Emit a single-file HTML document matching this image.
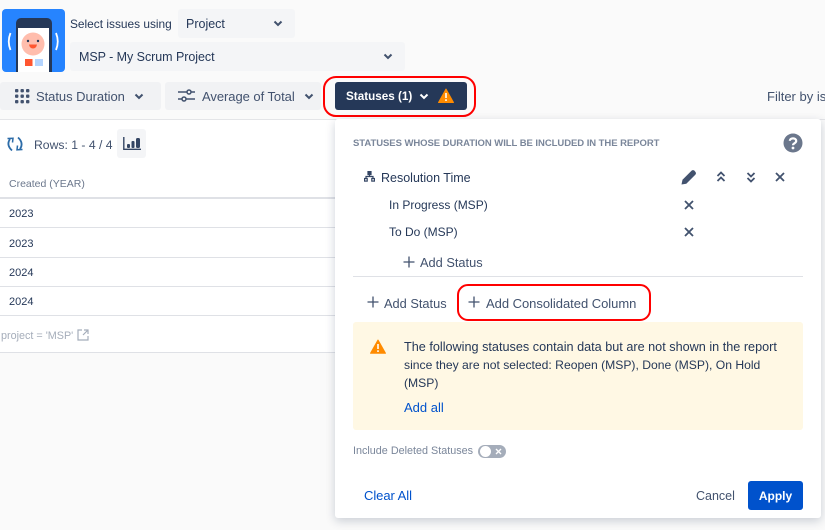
<!DOCTYPE html>
<html><head><meta charset="utf-8">
<style>
html,body{margin:0;padding:0;width:825px;height:530px;overflow:hidden;background:#fafafa;}
body{position:relative;font-family:"Liberation Sans",sans-serif;font-size:12.5px;color:#253858;}
.t{position:absolute;white-space:nowrap;line-height:16px;}
.b{position:absolute;background:#f4f5f7;border-radius:3px;}
svg{position:absolute;overflow:visible;}
.l{position:absolute;height:1px;background:#dfe1e6;}
</style></head><body>
<div style="position:absolute;left:0;top:120px;width:335px;height:232px;background:#fff"></div>
<div class="l" style="left:0;top:119px;width:825px;background:#e4e5e8"></div>

<svg style="left:2px;top:9px" width="63" height="63" viewBox="0 0 63 63">
<path d="M4 0H59a4 4 0 0 1 4 4V59a4 4 0 0 1-4 4H4a4 4 0 0 1-4-4V4a4 4 0 0 1 4-4z" fill="#2684ff"/>
<path d="M14 63V14a5 5 0 0 1 5-5H45a5 5 0 0 1 5 5V63z" fill="#253858"/>
<rect x="16" y="19" width="31" height="44" fill="#fff"/>
<circle cx="31" cy="35" r="11.500" fill="#ffbdad"/>
<path d="M27 35.500h8q-.8 4-4 4t-4-4z" fill="#ff5630"/>
<circle cx="26" cy="32" r="1.200" fill="#253858"/><circle cx="36" cy="32" r="1.200" fill="#253858"/>
<rect x="23" y="50" width="7.500" height="7" fill="#ff5630"/><rect x="33" y="50" width="8" height="7" fill="#b3d4ff"/>
<path d="M8.500 24q-3.500 8.500 0 17M54 24q3.500 8.500 0 17" stroke="#fff" stroke-width="1.800" fill="none"/>
</svg>

<div class="t" style="left:70px;top:16px;font-size:11.900px">Select issues using</div>
<div class="b" style="left:178px;top:9px;width:117px;height:29px"></div>
<div class="t" style="left:186px;top:16px;font-size:12.5px">Project</div>
<svg style="left:273px;top:20px" width="10" height="7"><path d="M1.500 1.500 5 5 8.500 1.500" stroke="#42526e" stroke-width="2" fill="none"/></svg>
<div class="b" style="left:70px;top:42px;width:335px;height:29px"></div>
<div class="t" style="left:79px;top:49px;letter-spacing:-.05px">MSP - My Scrum Project</div>
<svg style="left:383px;top:53px" width="10" height="7"><path d="M1.500 1.500 5 5 8.500 1.500" stroke="#42526e" stroke-width="2" fill="none"/></svg>

<div class="b" style="left:0;top:82px;width:161px;height:28px;background:#f1f2f4"></div>
<svg style="left:14px;top:88px" width="16" height="16" fill="#42526e">
<rect x="1" y="1" width="3.400" height="3.400" rx="1"/><rect x="6.500" y="1" width="3.400" height="3.400" rx="1"/><rect x="12" y="1" width="3.400" height="3.400" rx="1"/>
<rect x="1" y="6.500" width="3.400" height="3.400" rx="1"/><rect x="6.500" y="6.500" width="3.400" height="3.400" rx="1"/><rect x="12" y="6.500" width="3.400" height="3.400" rx="1"/>
<rect x="1" y="12" width="3.400" height="3.400" rx="1"/><rect x="6.500" y="12" width="3.400" height="3.400" rx="1"/><rect x="12" y="12" width="3.400" height="3.400" rx="1"/></svg>
<div class="t" style="left:36px;top:89px;color:#42526e;font-size:13px;letter-spacing:-.05px">Status Duration</div>
<svg style="left:134px;top:93px" width="10" height="7"><path d="M1.500 1.500 5 5 8.500 1.500" stroke="#42526e" stroke-width="2" fill="none"/></svg>

<div class="b" style="left:165px;top:82px;width:156px;height:28px;background:#f1f2f4"></div>
<svg style="left:178px;top:88px" width="18" height="16" fill="none" stroke="#42526e" stroke-width="1.500">
<path d="M0 4H9M13 4H17M0 11H4M8 11H17"/><circle cx="11" cy="4" r="2"/><circle cx="6" cy="11" r="2"/></svg>
<div class="t" style="left:202px;top:89px;color:#42526e;font-size:13px;letter-spacing:-.05px">Average of Total</div>
<svg style="left:304px;top:93px" width="10" height="7"><path d="M1.500 1.500 5 5 8.500 1.500" stroke="#42526e" stroke-width="2" fill="none"/></svg>

<div style="position:absolute;left:323px;top:76px;width:149px;height:37px;border:2px solid #f00;border-radius:13px"></div>
<div style="position:absolute;left:335px;top:82px;width:132px;height:28px;background:#253858;border-radius:3px"></div>
<div class="t" style="left:346px;top:89px;color:#fff;font-weight:bold;font-size:11.700px">Statuses (1)</div>
<svg style="left:419px;top:93px" width="10" height="7"><path d="M1.500 1.500 5 5 8.500 1.500" stroke="#fff" stroke-width="2" fill="none"/></svg>
<svg style="left:438px;top:88px" width="16" height="15"><path d="M8 1 15.500 14.500H.5z" fill="#ff8b00" stroke="#ff8b00" stroke-linejoin="round"/><path d="M8 5V10M8 11.300V13" stroke="#fff" stroke-width="1.600"/></svg>
<div class="t" style="left:767px;top:89px;color:#42526e;font-size:13px">Filter by is</div>

<svg style="left:7px;top:136px" width="16" height="16" fill="none" stroke="#2d6ca8" stroke-width="1.800"><path d="M5 14.500Q-1 9 3 3"/><path d="M11 1.500Q17 7 13 13"/><path d="M.5 2.500 6 2.300 5.500 6.500" stroke-width="1.500"/><path d="M15.500 13.500 10 13.800 10.500 9.500" stroke-width="1.500"/></svg>
<div class="t" style="left:34px;top:137px;color:#42526e;font-size:12.2px">Rows: 1 - 4 / 4</div>
<div class="b" style="left:117px;top:129px;width:29px;height:29px"></div>
<svg style="left:123px;top:137px" width="18" height="14"><path d="M.8 0V12.300H18" stroke="#344563" stroke-width="1.400" fill="none"/><rect x="4" y="7" width="3" height="4" rx="1" fill="#344563"/><rect x="8.500" y="4" width="3" height="7" rx="1" fill="#344563"/><rect x="13" y="1" width="4" height="10" rx="1.500" fill="#344563"/></svg>

<div class="t" style="left:9px;top:176px;font-size:10.500px;color:#6b778c">Created (YEAR)</div>
<div class="l" style="left:0;top:197px;width:335px;height:2px"></div>
<div class="t" style="left:9px;top:206px;font-size:11px">2023</div>
<div class="l" style="left:0;top:227px;width:335px"></div>
<div class="t" style="left:9px;top:236px;font-size:11px">2023</div>
<div class="l" style="left:0;top:257px;width:335px"></div>
<div class="t" style="left:9px;top:265px;font-size:11px">2024</div>
<div class="l" style="left:0;top:286px;width:335px"></div>
<div class="t" style="left:9px;top:294px;font-size:11px">2024</div>
<div class="l" style="left:0;top:315px;width:335px"></div>
<div class="t" style="left:1px;top:328px;font-size:10.800px;color:#a5adba">project = 'MSP'</div>
<svg style="left:77px;top:329px" width="12" height="12" fill="none" stroke="#a5adba" stroke-width="1.200"><path d="M5 1H1V11H11V7M7 1H11V5M11 1 6 6"/></svg>
<div class="l" style="left:0;top:352px;width:335px"></div>

<div style="position:absolute;left:335px;top:119px;width:486px;height:399px;background:#fff;border-radius:3px;box-shadow:0 3px 10px rgba(9,30,66,.2)"></div>
<div class="t" style="left:353px;top:136px;font-size:9.500px;font-weight:bold;color:#7a869a;letter-spacing:-.05px">STATUSES WHOSE DURATION WILL BE INCLUDED IN THE REPORT</div>
<svg style="left:783px;top:133px" width="20" height="20"><circle cx="10" cy="10" r="9.500" fill="#6b778c"/><path d="M6.800 7.800C7 4.500 13.200 4.500 13.200 8 13.200 10.300 10 10 10 12.300" stroke="#fff" stroke-width="2.200" fill="none"/><circle cx="10" cy="15" r="1.400" fill="#fff"/></svg>

<svg style="left:364px;top:171px" width="11" height="11" fill="none" stroke="#344563" stroke-width="1.200"><rect x="4" y=".6" width="3" height="3" fill="#344563"/><rect x=".6" y="7.500" width="2.600" height="2.600"/><rect x="7.800" y="7.500" width="2.600" height="2.600"/><path d="M5.500 3.500V5.500M2 7.500V5.500H9V7.500"/></svg>
<div class="t" style="left:381px;top:170px">Resolution Time</div>
<svg style="left:681px;top:169px" width="16" height="16"><path d="M.500 15.500 1.500 10.800 10.500 1.800Q12 .5 13.500 1.800L14.500 3Q15.500 4.500 14.300 5.800L5.300 14.700z" fill="#42526e"/></svg>
<svg style="left:716px;top:171px" width="10" height="12" fill="none" stroke="#42526e" stroke-width="1.800"><path d="M1.500 5 5 1.500 8.500 5M1.500 10 5 6.500 8.500 10"/></svg>
<svg style="left:746px;top:171px" width="10" height="12" fill="none" stroke="#42526e" stroke-width="1.800"><path d="M1.500 2 5 5.500 8.500 2M1.500 7 5 10.500 8.500 7"/></svg>
<svg style="left:775px;top:172px" width="10" height="10" stroke="#42526e" stroke-width="1.800"><path d="M1 1 9 9M9 1 1 9"/></svg>

<div class="t" style="left:389px;top:197px;font-size:12px">In Progress (MSP)</div>
<svg style="left:684px;top:200px" width="10" height="10" stroke="#42526e" stroke-width="1.800"><path d="M1 1 9 9M9 1 1 9"/></svg>
<div class="t" style="left:389px;top:224px;font-size:12px">To Do (MSP)</div>
<svg style="left:684px;top:227px" width="10" height="10" stroke="#42526e" stroke-width="1.800"><path d="M1 1 9 9M9 1 1 9"/></svg>
<svg style="left:403px;top:256px" width="12" height="12" stroke="#42526e" stroke-width="1.300"><path d="M6 .5V11.500M.5 6H11.500"/></svg>
<div class="t" style="left:420px;top:255px;color:#42526e;font-size:12.8px">Add Status</div>
<div class="l" style="left:353px;top:276px;width:450px"></div>

<svg style="left:367px;top:296px" width="12" height="12" stroke="#42526e" stroke-width="1.300"><path d="M6 .5V11.500M.5 6H11.500"/></svg>
<div class="t" style="left:384px;top:296px;color:#42526e;font-size:12.8px">Add Status</div>
<div style="position:absolute;left:457px;top:284px;width:190px;height:33px;border:2px solid #f00;border-radius:11px"></div>
<svg style="left:468px;top:296px" width="12" height="12" stroke="#42526e" stroke-width="1.300"><path d="M6 .5V11.500M.5 6H11.500"/></svg>
<div class="t" style="left:486px;top:296px;color:#42526e;font-size:13px;letter-spacing:-.03px">Add Consolidated Column</div>

<div style="position:absolute;left:353px;top:322px;width:450px;height:108px;background:#fff8e4;border-radius:3px"></div>
<svg style="left:370px;top:339px" width="16" height="15"><path d="M8 1 15.500 14.200H.5z" fill="#ff8b00" stroke="#ff8b00" stroke-linejoin="round"/><path d="M8 5V10M8 11.300V13" stroke="#fff" stroke-width="1.600"/></svg>
<div class="t" style="left:404px;top:339px;font-size:12.66px">The following statuses contain data but are not shown in the report</div>
<div class="t" style="left:404px;top:357px;font-size:12.15px">since they are not selected: Reopen (MSP), Done (MSP), On Hold</div>
<div class="t" style="left:404px;top:375px;font-size:12.15px">(MSP)</div>
<div class="t" style="left:404px;top:400px;color:#0052cc;font-size:13px">Add all</div>

<div class="t" style="left:353px;top:443px;font-size:10.800px;color:#7a869a">Include Deleted Statuses</div>
<div style="position:absolute;left:478px;top:445px;width:28px;height:13px;background:#a5adba;border-radius:7px"></div>
<div style="position:absolute;left:480px;top:446px;width:11px;height:11px;background:#fff;border-radius:50%"></div>
<svg style="left:495px;top:448px" width="7" height="7" stroke="#fff" stroke-width="1.400"><path d="M1 1 6 6M6 1 1 6"/></svg>

<div class="t" style="left:364px;top:488px;color:#0052cc;font-size:13px;letter-spacing:-.05px">Clear All</div>
<div class="t" style="left:696px;top:488px;color:#42526e;font-size:12.5px">Cancel</div>
<div style="position:absolute;left:748px;top:481px;width:55px;height:29px;background:#0052cc;border-radius:3px"></div>
<div class="t" style="left:748px;width:55px;text-align:center;top:488px;color:#fff;font-weight:bold;font-size:12px">Apply</div>
</body></html>
